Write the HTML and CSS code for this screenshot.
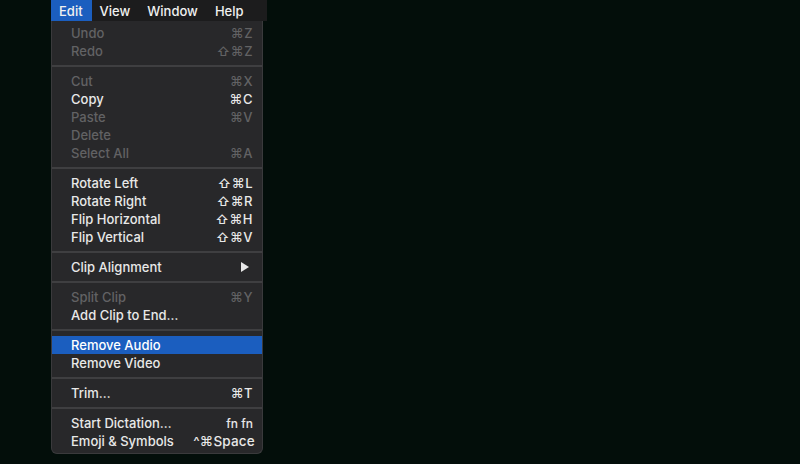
FILE: index.html
```html
<!DOCTYPE html>
<html lang="en">
<head>
    <meta charset="UTF-8">
    <meta name="viewport" content="width=device-width, initial-scale=1.0">
    <title>Edit Menu</title>
    <link rel="stylesheet" href="styles.css">
</head>
<body>
    <div class="menubar">
        <span class="title active">Edit</span>
        <span class="title">View</span>
        <span class="title">Window</span>
        <span class="title">Help</span>
    </div>

    <ul class="menu">
        <li class="item disabled"><span>Undo</span><span class="key">⌘Z</span></li>
        <li class="item disabled"><span>Redo</span><span class="key">⇧⌘Z</span></li>
        <li class="sep"></li>
        <li class="item disabled"><span>Cut</span><span class="key">⌘X</span></li>
        <li class="item"><span>Copy</span><span class="key">⌘C</span></li>
        <li class="item disabled"><span>Paste</span><span class="key">⌘V</span></li>
        <li class="item disabled"><span>Delete</span></li>
        <li class="item disabled"><span>Select All</span><span class="key">⌘A</span></li>
        <li class="sep"></li>
        <li class="item"><span>Rotate Left</span><span class="key">⇧⌘L</span></li>
        <li class="item"><span>Rotate Right</span><span class="key">⇧⌘R</span></li>
        <li class="item"><span>Flip Horizontal</span><span class="key">⇧⌘H</span></li>
        <li class="item"><span>Flip Vertical</span><span class="key">⇧⌘V</span></li>
        <li class="sep"></li>
        <li class="item"><span>Clip Alignment</span><span class="arrow"></span></li>
        <li class="sep"></li>
        <li class="item disabled"><span>Split Clip</span><span class="key">⌘Y</span></li>
        <li class="item"><span>Add Clip to End…</span></li>
        <li class="sep"></li>
        <li class="item selected"><span>Remove Audio</span></li>
        <li class="item"><span>Remove Video</span></li>
        <li class="sep"></li>
        <li class="item"><span>Trim…</span><span class="key">⌘T</span></li>
        <li class="sep"></li>
        <li class="item"><span>Start Dictation…</span><span class="key small">fn fn</span></li>
        <li class="item"><span>Emoji &amp; Symbols</span><span class="key wide">^⌘Space</span></li>
    </ul>
</body>
</html>
```

FILE: styles.css
```css
body {
    margin: 0;
    background-color: #030e0a;
    font-family: Inter, "Noto Sans", "DejaVu Sans", sans-serif;
    font-size: 13px;
    color: #e8e8e8;
    height: 464px;
    overflow: hidden;
}
.menubar {
    display: flex;
    width: 216px;
    height: 21px;
    margin-left: 51px;
    background-color: #1c1c1d;
    font-size: 13px;
    font-weight: 500;
}
.title {
    display: flex;
    align-items: center;
    padding: 0 9px 0 8px;
    color: #f0f0f0;
}
.title.active {
    background-color: #1b5ebf;
}
.menu {
    list-style-type: none;
    width: 212px;
    margin: 0 0 0 51px;
    padding: 3px 0 3px;
    background-color: #28282a;
    border: 1px solid #3a3a3c;
    border-top: none;
    border-radius: 0 0 6px 6px;
    box-sizing: border-box;
}
.item {
    display: flex;
    justify-content: space-between;
    align-items: center;
    height: 18px;
    padding: 0 9px 0 19px;
    font-weight: 500;
}
.item.disabled {
    color: #626264;
}
.item.selected {
    background-color: #1b5ebf;
    color: #ffffff;
}
.key {
    letter-spacing: 0.5px;
}
.key.small {
    font-size: 12px;
    letter-spacing: 0;
}
.key.wide {
    margin-right: -2px;
    font-size: 13.5px;
    letter-spacing: 0.2px;
}
.arrow {
    width: 0;
    height: 0;
    margin-right: 4px;
    border-left: 8px solid #e8e8e8;
    border-top: 5px solid transparent;
    border-bottom: 5px solid transparent;
}
.sep {
    height: 2px;
    margin: 5px 0;
    background-color: #3f3f41;
}
```
